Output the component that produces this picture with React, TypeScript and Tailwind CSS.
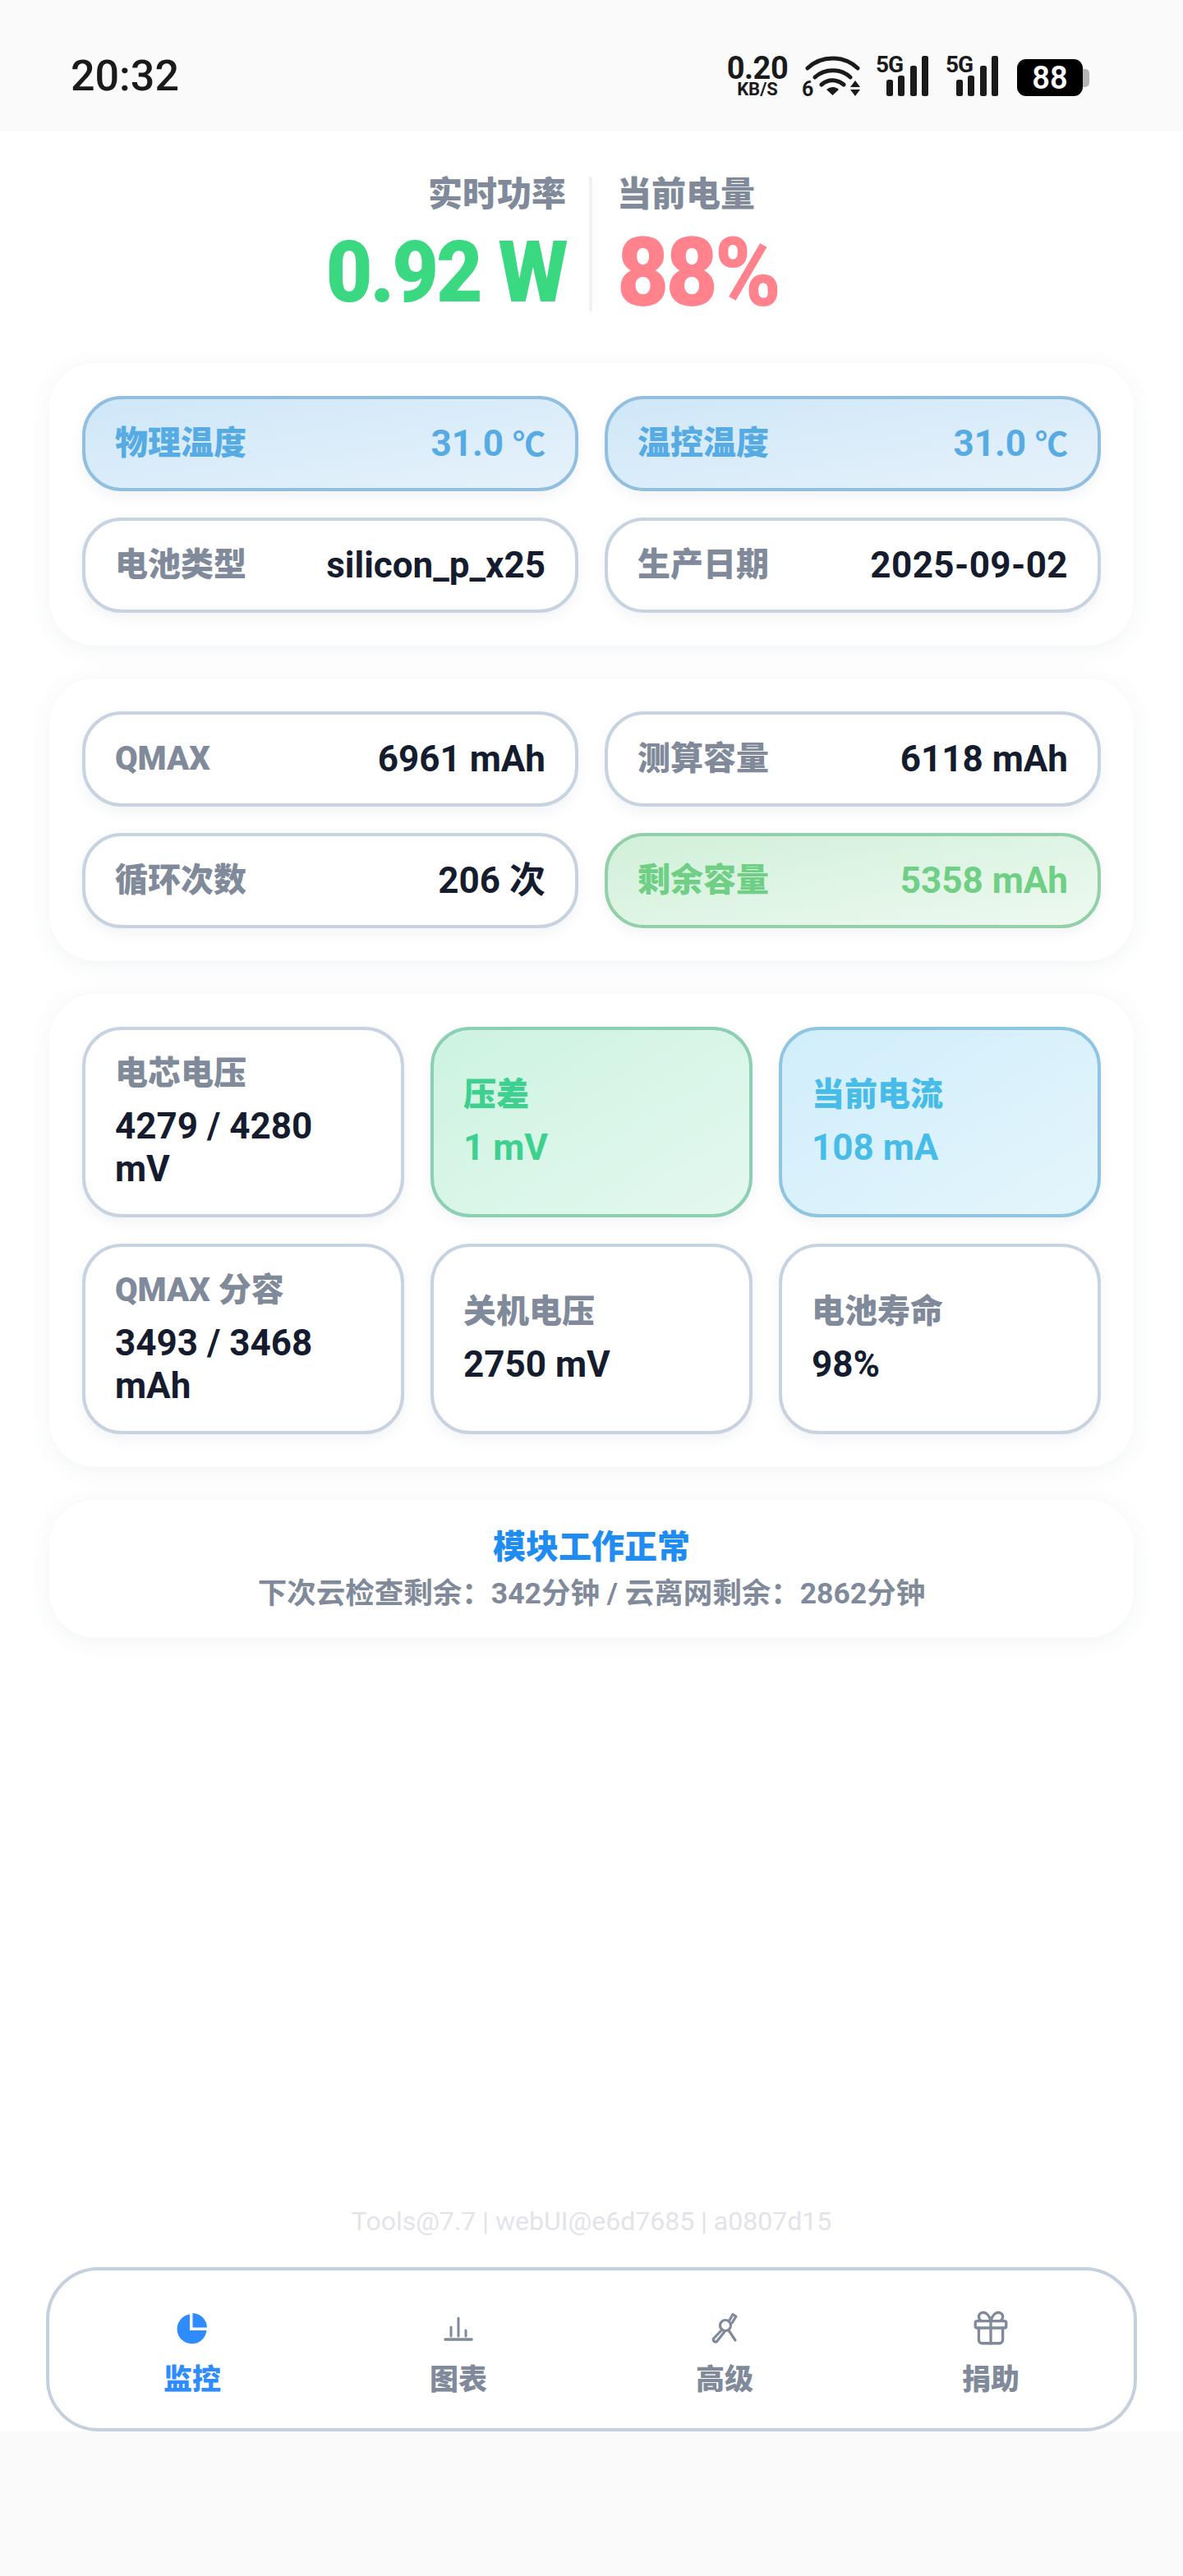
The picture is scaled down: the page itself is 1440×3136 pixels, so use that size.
import { Gift } from 'lucide-react';

const font = "font-['Roboto','Noto_Sans_CJK_SC',sans-serif]";

type Tone = 'plain' | 'blue' | 'green' | 'mint' | 'sky';

const tones: Record<Tone, { box: string; label: string; value: string }> = {
  plain: { box: 'bg-white border-[#c8d3e1]', label: 'text-[#808a9a]', value: 'text-[#141c2e]' },
  blue: {
    box: 'bg-gradient-to-br from-[#cfe7f8] to-[#e6f2fb] border-[#92bfe0]',
    label: 'text-[#56abe4]',
    value: 'text-[#56abe4]',
  },
  green: {
    box: 'bg-gradient-to-br from-[#d0f0d9] to-[#eef9f0] border-[#93cfa9]',
    label: 'text-[#6fcf85]',
    value: 'text-[#6fcf85]',
  },
  mint: {
    box: 'bg-gradient-to-br from-[#cdf3e2] to-[#e4f8ef] border-[#8ccfb2]',
    label: 'text-[#3dd08f]',
    value: 'text-[#3dd08f]',
  },
  sky: {
    box: 'bg-gradient-to-br from-[#d0eefb] to-[#e4f5fc] border-[#90c5e2]',
    label: 'text-[#47bce8]',
    value: 'text-[#47bce8]',
  },
};

function Row({ label, value, tone = 'plain' }: { label: string; value: React.ReactNode; tone?: Tone }) {
  const t = tones[tone];
  return (
    <div
      className={`h-[116px] rounded-[48px] border-[4px] px-[36px] flex items-center justify-between shadow-[0_6px_16px_rgba(60,90,130,0.07)] ${t.box}`}
    >
      <span className={`text-[40px] font-black ${t.label}`}>{label}</span>
      <span className={`text-[44px] font-bold ${t.value}`}>{value}</span>
    </div>
  );
}

function Tile({ label, value, tone = 'plain' }: { label: string; value: string; tone?: Tone }) {
  const t = tones[tone];
  return (
    <div
      className={`h-[232px] rounded-[48px] border-[4px] px-[36px] flex flex-col justify-center shadow-[0_6px_16px_rgba(60,90,130,0.07)] ${t.box}`}
    >
      <span className={`text-[40px] leading-[48px] font-black ${t.label}`}>{label}</span>
      <span className={`mt-[14px] text-[44px] leading-[52px] font-bold ${t.value}`}>{value}</span>
    </div>
  );
}

function Card({ children, className }: { children: React.ReactNode; className: string }) {
  return (
    <section className={`rounded-[56px] bg-white shadow-[0_4px_28px_rgba(60,80,110,0.07)] ${className}`}>
      {children}
    </section>
  );
}

function Signal() {
  return (
    <div className="relative w-[64px] h-[49px]">
      <svg width="64" height="49" viewBox="0 0 64 49" className="block">
        <rect x="13" y="29" width="8" height="20" rx="2.500" fill="#1a1a1a" />
        <rect x="27" y="24" width="8" height="25" rx="2.500" fill="#1a1a1a" />
        <rect x="42" y="12" width="8" height="37" rx="2.500" fill="#1a1a1a" />
        <rect x="56" y="0" width="8" height="49" rx="2.500" fill="#1a1a1a" />
      </svg>
      <span className="absolute left-0 top-[-4px] text-[28px] leading-[30px] font-bold tracking-[-1px] text-[#1a1a1a]">
        5G
      </span>
    </div>
  );
}

function StatusBar() {
  return (
    <header className="h-[160px] bg-[#fafafa] pl-[86px] pr-[114px] flex items-start justify-between">
      <span className="mt-[62px] text-[52px] leading-[62px] font-medium text-[#1a1a1a]">20:32</span>
      <div className="mt-[68px] flex items-start">
        <div className="w-[80px] flex flex-col items-center text-[#1a1a1a] font-bold">
          <span className="text-[38px] leading-[30px] tracking-[-0.5px]">0.20</span>
          <span className="text-[22px] leading-[20px] mt-[1px]">KB/S</span>
        </div>
        <div className="relative ml-[15px] w-[72px] h-[49px]">
          <svg width="72" height="49" viewBox="0 0 72 49" className="block" fill="none" stroke="#1a1a1a" strokeWidth="5" strokeLinecap="round">
            <path d="M6 15 C 23 -1, 50 -1, 67 15" />
            <path d="M15 26 C 27 15, 46 15, 58 26" />
            <path d="M23 35 C 31 28, 42 28, 50 35" />
            <path d="M29 41 Q 36.500 35 44 41 L 36.500 48 Z" fill="#1a1a1a" stroke="none" />
            <path d="M58 38 L64 30 L70 38 Z" fill="#1a1a1a" stroke="none" />
            <path d="M58 41 L70 41 L64 49 Z" fill="#1a1a1a" stroke="none" />
          </svg>
          <span className="absolute left-[-1px] bottom-[-5px] text-[25px] leading-[26px] font-bold text-[#1a1a1a]">6</span>
        </div>
        <div className="ml-[17px]">
          <Signal />
        </div>
        <div className="ml-[21px]">
          <Signal />
        </div>
        <div className="ml-[23px] mt-[4px] flex items-center">
          <div className="w-[80px] h-[45px] rounded-[11px] bg-black text-white flex items-center justify-center text-[38px] leading-none font-semibold">
            88
          </div>
          <div className="w-[8px] h-[22px] rounded-r-[5px] bg-[#b5b5b5]" />
        </div>
      </div>
    </header>
  );
}

function ChartIcon() {
  return (
    <svg width="40" height="40" viewBox="0 0 40 40" fill="none" stroke="#808a9a" strokeLinecap="round" className="block">
      <path d="M4 34 H36" strokeWidth="3.500" />
      <path d="M11 30 V19" strokeWidth="3" />
      <path d="M20 30 V8" strokeWidth="3" />
      <path d="M29 30 V23" strokeWidth="3" />
    </svg>
  );
}

function PieIcon() {
  return (
    <svg width="40" height="40" viewBox="0 0 40 40" className="block">
      <path d="M17 3.500 A 18 18 0 1 0 37.500 23 H17 Z" fill="#2f8cff" />
      <path d="M20.500 2 A 18 18 0 0 1 38 19.500 H20.500 Z" fill="#2f8cff" />
    </svg>
  );
}

function ToolIcon() {
  return (
    <svg width="40" height="40" viewBox="0 0 40 40" fill="none" stroke="#808a9a" strokeWidth="3.200" strokeLinecap="round" strokeLinejoin="round" className="block">
      <circle cx="21" cy="17" r="6.500" />
      <path d="M25.500 11.500 L30 3.500 L34 6 L29 14" />
      <path d="M17 22 L6.500 33 A 2.800 2.800 0 0 0 10.500 36.500 L20.500 24" />
      <path d="M25 23 L33 35" />
    </svg>
  );
}

function Tab({ icon, label, active }: { icon: React.ReactNode; label: string; active?: boolean }) {
  return (
    <div className="flex-1 flex flex-col items-center">
      <div className="h-[48px] flex items-center justify-center">{icon}</div>
      <span className={`mt-[20px] text-[35px] leading-[40px] font-black ${active ? 'text-[#2f8cff]' : 'text-[#808a9a]'}`}>
        {label}
      </span>
    </div>
  );
}

export default function App() {
  return (
    <div className={`min-h-[3136px] flex flex-col bg-[#fafafa] ${font}`}>
      <StatusBar />

      <main className="h-[2800px] bg-white flex flex-col px-[60px]">
        <div className="h-[282px] flex justify-center pt-[52px]">
          <div className="flex-1 flex flex-col items-end pr-[28px]">
            <span className="text-[42px] leading-[50px] font-black text-[#808a9a]">实时功率</span>
            <span className="mt-[14px] origin-right scale-x-[0.94] tracking-[-3px] text-[104px] leading-[112px] font-black text-[#3ad880]">0.92 W</span>
          </div>
          <div className="mt-[3px] w-[4px] h-[164px] bg-[#f0f1f3]" />
          <div className="flex-1 flex flex-col items-start pl-[30px]">
            <span className="text-[42px] leading-[50px] font-black text-[#808a9a]">当前电量</span>
            <span className="mt-[14px] origin-left scale-x-[0.94] tracking-[-4px] text-[116px] leading-[112px] font-black text-[#ff828c]">88%</span>
          </div>
        </div>

        <Card className="p-[40px] grid grid-cols-2 gap-[32px]">
          <Row label="物理温度" value={<>31.0 <span className="text-[40px]">℃</span></>} tone="blue" />
          <Row label="温控温度" value={<>31.0 <span className="text-[40px]">℃</span></>} tone="blue" />
          <Row label="电池类型" value="silicon_p_x25" />
          <Row label="生产日期" value={<span className="tracking-[0.4px]">2025-09-02</span>} />
        </Card>

        <Card className="mt-[40px] p-[40px] grid grid-cols-2 gap-[32px]">
          <Row label="QMAX" value="6961 mAh" />
          <Row label="测算容量" value="6118 mAh" />
          <Row label="循环次数" value="206 次" />
          <Row label="剩余容量" value="5358 mAh" tone="green" />
        </Card>

        <Card className="mt-[40px] p-[40px] grid grid-cols-3 gap-[32px]">
          <Tile label="电芯电压" value="4279 / 4280 mV" />
          <Tile label="压差" value="1 mV" tone="mint" />
          <Tile label="当前电流" value="108 mA" tone="sky" />
          <Tile label="QMAX 分容" value="3493 / 3468 mAh" />
          <Tile label="关机电压" value="2750 mV" />
          <Tile label="电池寿命" value="98%" />
        </Card>

        <Card className="mt-[40px] h-[168px] flex flex-col items-center justify-center">
          <span className="text-[40px] leading-[52px] font-black text-[#1e8cf0]">模块工作正常</span>
          <span className="mt-[8px] text-[35.500px] leading-[44px] font-bold text-[#808a9a]">
            下次云检查剩余：342分钟 / 云离网剩余：2862分钟
          </span>
        </Card>

        <p className="mt-auto mb-[36px] text-center text-[32px] leading-[40px] text-[#e2e4ea]">
          Tools@7.7 | webUI@e6d7685 | a0807d15
        </p>

        <nav className="-mx-[4px] h-[200px] rounded-[64px] border-[4px] border-[#c4d0de] bg-white px-[12px] pt-[8px] flex items-center">
          <Tab icon={<PieIcon />} label="监控" active />
          <Tab icon={<ChartIcon />} label="图表" />
          <Tab icon={<ToolIcon />} label="高级" />
          <Tab icon={<Gift size={50} strokeWidth={1.6} color="#808a9a" />} label="捐助" />
        </nav>
      </main>

      <div className="flex-1 bg-[#fafafa]" />
    </div>
  );
}
